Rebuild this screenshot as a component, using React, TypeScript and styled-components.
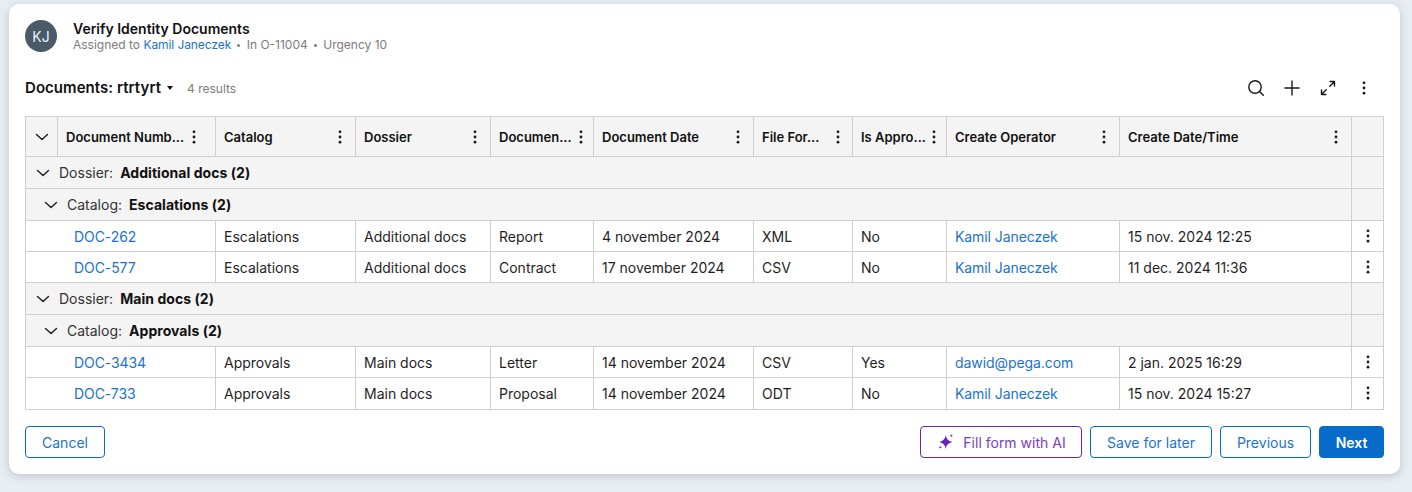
import React from "react";
import styled, { createGlobalStyle } from "styled-components";

const Global = createGlobalStyle`
  html, body { margin: 0; padding: 0; background: #e8edf2; }
  body { font-family: Inter, "Noto Sans", sans-serif; color: #1a1a1a; }
  * { box-sizing: border-box; }
`;

const Page = styled.div`
  width: 1412px;
  height: 492px;
  padding: 4px 12px 18px 9px;
  overflow: hidden;
`;

const Card = styled.main`
  width: 1391px;
  height: 470px;
  background: #fff;
  border-radius: 10px;
  box-shadow: 0 2px 8px rgba(40, 55, 75, 0.22);
  padding: 16px;
  display: flex;
  flex-direction: column;
`;

const Header = styled.header`
  display: flex;
  align-items: center;
  gap: 16px;
  height: 32px;
`;

const Avatar = styled.div`
  width: 32px;
  height: 32px;
  border-radius: 50%;
  background: #4b5a68;
  color: #e3f1ff;
  font-size: 14px;
  display: flex;
  align-items: center;
  justify-content: center;
`;

const HeaderText = styled.div`
  display: flex;
  flex-direction: column;
  padding-top: 2px;
`;

const Title = styled.h1`
  margin: 0;
  font-size: 14px;
  line-height: 16px;
  font-weight: 600;
  color: #111;
`;

const Meta = styled.div`
  font-size: 12px;
  line-height: 16px;
  color: #7c7c7c;
  display: flex;
  gap: 5px;
  align-items: center;
`;

const Dot = styled.span`
  width: 3px;
  height: 3px;
  border-radius: 50%;
  background: #7c7c7c;
  margin: 1px 1.25px 0;
`;

const Link = styled.a`
  color: #1a73d0;
  text-decoration: none;
  letter-spacing: -0.08px;
`;

const Toolbar = styled.div`
  display: flex;
  align-items: center;
  height: 32px;
  margin-top: 20px;
  margin-bottom: 12px;
`;

const ToolbarTitle = styled.div`
  font-size: 15px;
  font-weight: 600;
  letter-spacing: 0.05px;
  color: #111;
  display: flex;
  align-items: center;
  gap: 6px;
  margin-top: -1px;
`;

const Caret = styled.span`
  width: 0;
  height: 0;
  border-left: 3.5px solid transparent;
  border-right: 3.5px solid transparent;
  border-top: 4px solid #111;
`;

const Count = styled.span`
  font-size: 12px;
  color: #7c7c7c;
  margin-left: 14px;
`;

const ToolbarActions = styled.div`
  margin-left: auto;
  margin-right: 12px;
  display: flex;
  align-items: center;
  gap: 20px;
`;

const Grid = styled.table`
  table-layout: fixed;
  width: 1358px;
  border-collapse: collapse;
  font-size: 14px;
  color: #1f1f1f;
`;

const HeadCell = styled.th`
  border: 1px solid #cfcfcf;
  background: #f4f4f4;
  height: 40px;
  padding: 0 8px;
  text-align: left;
  font-size: 13px;
  font-weight: 600;
  color: #111;
`;

const BareHeadCell = styled(HeadCell)`
  padding: 0;
`;

const HeadInner = styled.div`
  display: flex;
  align-items: center;
  justify-content: space-between;
`;

const HeadLabel = styled.span`
  white-space: nowrap;
`;

const HeadMenu = styled.span<{ $inset: number }>`
  display: inline-flex;
  margin-right: ${(p) => p.$inset}px;
`;

const GroupCell = styled.td`
  border: 1px solid #cfcfcf;
  background: #f4f4f4;
  height: 32px;
  padding: 0;
`;

const GroupInner = styled.div<{ $indent: number }>`
  display: flex;
  align-items: center;
  padding-left: ${(p) => p.$indent}px;
  font-size: 14px;
  color: #333;
`;

const GroupValue = styled.strong`
  font-weight: 700;
  letter-spacing: 0.05px;
  color: #111;
  margin-left: 7px;
`;

const ChevronSlot = styled.span`
  display: inline-flex;
  width: 16px;
  margin-right: 8px;
`;

const HeadChevron = styled.div`
  display: flex;
  justify-content: center;
`;

const Cell = styled.td`
  border: 1px solid #cfcfcf;
  height: 31px;
  padding: 0 8px;
  font-size: 14px;
  white-space: nowrap;
  tbody tr:last-child & {
    height: 32px;
  }
`;

const DocCell = styled(Cell)`
  padding-left: 48px;
`;

const ActionCell = styled(Cell)`
  padding: 0;
  text-align: center;
`;

const RowMenu = styled.span`
  display: inline-flex;
  vertical-align: middle;
  margin-bottom: 2px;
`;

const Footer = styled.footer`
  margin-top: 16px;
  display: flex;
  align-items: center;
  gap: 8px;
`;

const Spacer = styled.div`
  flex: 1;
`;

const Button = styled.button<{ $w: number; $variant?: "primary" | "ai" }>`
  width: ${(p) => p.$w}px;
  height: 32px;
  border-radius: 4px;
  font: inherit;
  font-size: 14px;
  font-weight: ${(p) => (p.$variant === "primary" ? 600 : 400)};
  background: ${(p) => (p.$variant === "primary" ? "#076bc9" : "#fff")};
  color: ${(p) =>
    p.$variant === "primary" ? "#fff" : p.$variant === "ai" ? "#7a3bc8" : "#1a73d0"};
  border: 1px solid ${(p) => (p.$variant === "ai" ? "#6a22c0" : "#076bc9")};
  display: inline-flex;
  align-items: center;
  justify-content: center;
  gap: 9px;
  padding: 0 0 0 ${(p) => (p.$variant === "ai" ? 2 : 0)}px;
`;

const Chevron = () => (
  <svg width="16" height="16" viewBox="0 0 16 16" fill="none">
    <path d="M2.5 5.5 8 10.5l5.500-5" stroke="#1a1a1a" strokeWidth="1.4" strokeLinecap="round" strokeLinejoin="round" />
  </svg>
);

const Kebab = () => (
  <svg width="16" height="16" viewBox="0 0 16 16" fill="#1a1a1a">
    <circle cx="8" cy="2.8" r="1.4" />
    <circle cx="8" cy="8" r="1.4" />
    <circle cx="8" cy="13.2" r="1.4" />
  </svg>
);

const SearchIcon = () => (
  <svg width="16" height="16" viewBox="0 0 16 16" fill="none" stroke="#1a1a1a" strokeWidth="1.4" strokeLinecap="round">
    <circle cx="7" cy="7" r="6.2" />
    <path d="M11.500 11.500 15.300 15.300" />
  </svg>
);

const PlusIcon = () => (
  <svg width="16" height="16" viewBox="0 0 16 16" fill="none" stroke="#1a1a1a" strokeWidth="1.4" strokeLinecap="round">
    <path d="M8 1v14M1 8h14" />
  </svg>
);

const ExpandIcon = () => (
  <svg width="16" height="16" viewBox="0 0 16 16" fill="none" stroke="#1a1a1a" strokeWidth="1.4" strokeLinecap="round" strokeLinejoin="round">
    <path d="M9.800 6.200 14.500 1.500M10 1.500h4.500V6M6.200 9.800 1.500 14.500M1.500 10v4.500H6" />
  </svg>
);

const SparkleIcon = () => (
  <svg width="16" height="16" viewBox="0 0 16 16" fill="#6a22c0">
    <path d="M7.700 1c.6 3.900 2.200 5.700 7 7-4.800 1.300-6.400 3.100-7 7-.6-3.900-2.200-5.700-6.500-7C5.500 6.700 7.100 4.900 7.700 1z" />
    <path d="M13.300 0c.2 1.100.6 1.500 1.700 1.800-1.100.3-1.500.7-1.700 1.800-.2-1.100-.6-1.500-1.700-1.800 1.100-.3 1.500-.7 1.700-1.800z" />
    <path d="M2.300 11.600c.2 1.100.6 1.500 1.700 1.700-1.100.2-1.500.6-1.700 1.700-.2-1.100-.6-1.500-1.700-1.700 1.100-.2 1.500-.6 1.700-1.700z" />
  </svg>
);

// inset: extra room to the right of the column menu, on top of the cell padding
const columns: { label: string; width: number; inset: number }[] = [
  { label: "Document Numb...", width: 158, inset: 5 },
  { label: "Catalog", width: 140, inset: -1 },
  { label: "Dossier", width: 135, inset: -1 },
  { label: "Documen...", width: 103, inset: -4 },
  { label: "Document Date", width: 160, inset: -1 },
  { label: "File For...", width: 99, inset: -2 },
  { label: "Is Appro...", width: 94, inset: -1 },
  { label: "Create Operator", width: 173, inset: -1 },
  { label: "Create Date/Time", width: 232, inset: -1 },
];

type Doc = { id: string; catalog: string; dossier: string; kind: string; date: string; format: string; approved: string; operator: string; created: string };
type Section = { dossier: string; catalog: string; rows: Doc[] };

const sections: Section[] = [
  {
    dossier: "Additional docs (2)",
    catalog: "Escalations (2)",
    rows: [
      { id: "DOC-262", catalog: "Escalations", dossier: "Additional docs", kind: "Report", date: "4 november 2024", format: "XML", approved: "No", operator: "Kamil Janeczek", created: "15 nov. 2024 12:25" },
      { id: "DOC-577", catalog: "Escalations", dossier: "Additional docs", kind: "Contract", date: "17 november 2024", format: "CSV", approved: "No", operator: "Kamil Janeczek", created: "11 dec. 2024 11:36" },
    ],
  },
  {
    dossier: "Main docs (2)",
    catalog: "Approvals (2)",
    rows: [
      { id: "DOC-3434", catalog: "Approvals", dossier: "Main docs", kind: "Letter", date: "14 november 2024", format: "CSV", approved: "Yes", operator: "dawid@pega.com", created: "2 jan. 2025 16:29" },
      { id: "DOC-733", catalog: "Approvals", dossier: "Main docs", kind: "Proposal", date: "14 november 2024", format: "ODT", approved: "No", operator: "Kamil Janeczek", created: "15 nov. 2024 15:27" },
    ],
  },
];

const GroupRow = ({ label, value, indent }: { label: string; value: string; indent: number }) => (
  <tr>
    <GroupCell colSpan={10}>
      <GroupInner $indent={indent}>
        <ChevronSlot><Chevron /></ChevronSlot>
        {label}:<GroupValue>{value}</GroupValue>
      </GroupInner>
    </GroupCell>
    <GroupCell />
  </tr>
);

export default function App() {
  return (
    <Page>
      <Global />
      <Card>
        <Header>
          <Avatar>KJ</Avatar>
          <HeaderText>
            <Title>Verify Identity Documents</Title>
            <Meta>
              <span>Assigned to <Link href="#">Kamil Janeczek</Link></span>
              <Dot />
              <span>In O-11004</span>
              <Dot />
              <span>Urgency 10</span>
            </Meta>
          </HeaderText>
        </Header>

        <Toolbar>
          <ToolbarTitle>Documents: rtrtyrt <Caret /></ToolbarTitle>
          <Count>4 results</Count>
          <ToolbarActions>
            <SearchIcon />
            <PlusIcon />
            <ExpandIcon />
            <Kebab />
          </ToolbarActions>
        </Toolbar>

        <Grid>
          <colgroup>
            <col width={32} />
            {columns.map((c) => <col key={c.label} width={c.width} />)}
            <col width={32} />
          </colgroup>
          <thead>
            <tr>
              <BareHeadCell>
                <HeadChevron><Chevron /></HeadChevron>
              </BareHeadCell>
              {columns.map((c) => (
                <HeadCell key={c.label}>
                  <HeadInner>
                    <HeadLabel>{c.label}</HeadLabel>
                    <HeadMenu $inset={c.inset}><Kebab /></HeadMenu>
                  </HeadInner>
                </HeadCell>
              ))}
              <HeadCell />
            </tr>
          </thead>
          <tbody>
            {sections.map((s) => (
              <React.Fragment key={s.dossier}>
                <GroupRow label="Dossier" value={s.dossier} indent={9} />
                <GroupRow label="Catalog" value={s.catalog} indent={17} />
                {s.rows.map((r) => (
                  <tr key={r.id}>
                    <DocCell colSpan={2}><Link href="#">{r.id}</Link></DocCell>
                    <Cell>{r.catalog}</Cell>
                    <Cell>{r.dossier}</Cell>
                    <Cell>{r.kind}</Cell>
                    <Cell>{r.date}</Cell>
                    <Cell>{r.format}</Cell>
                    <Cell>{r.approved}</Cell>
                    <Cell><Link href="#">{r.operator}</Link></Cell>
                    <Cell>{r.created}</Cell>
                    <ActionCell><RowMenu><Kebab /></RowMenu></ActionCell>
                  </tr>
                ))}
              </React.Fragment>
            ))}
          </tbody>
        </Grid>

        <Footer>
          <Button $w={80}>Cancel</Button>
          <Spacer />
          <Button $w={162} $variant="ai"><SparkleIcon />Fill form with AI</Button>
          <Button $w={122}>Save for later</Button>
          <Button $w={91}>Previous</Button>
          <Button $w={65} $variant="primary">Next</Button>
        </Footer>
      </Card>
    </Page>
  );
}
